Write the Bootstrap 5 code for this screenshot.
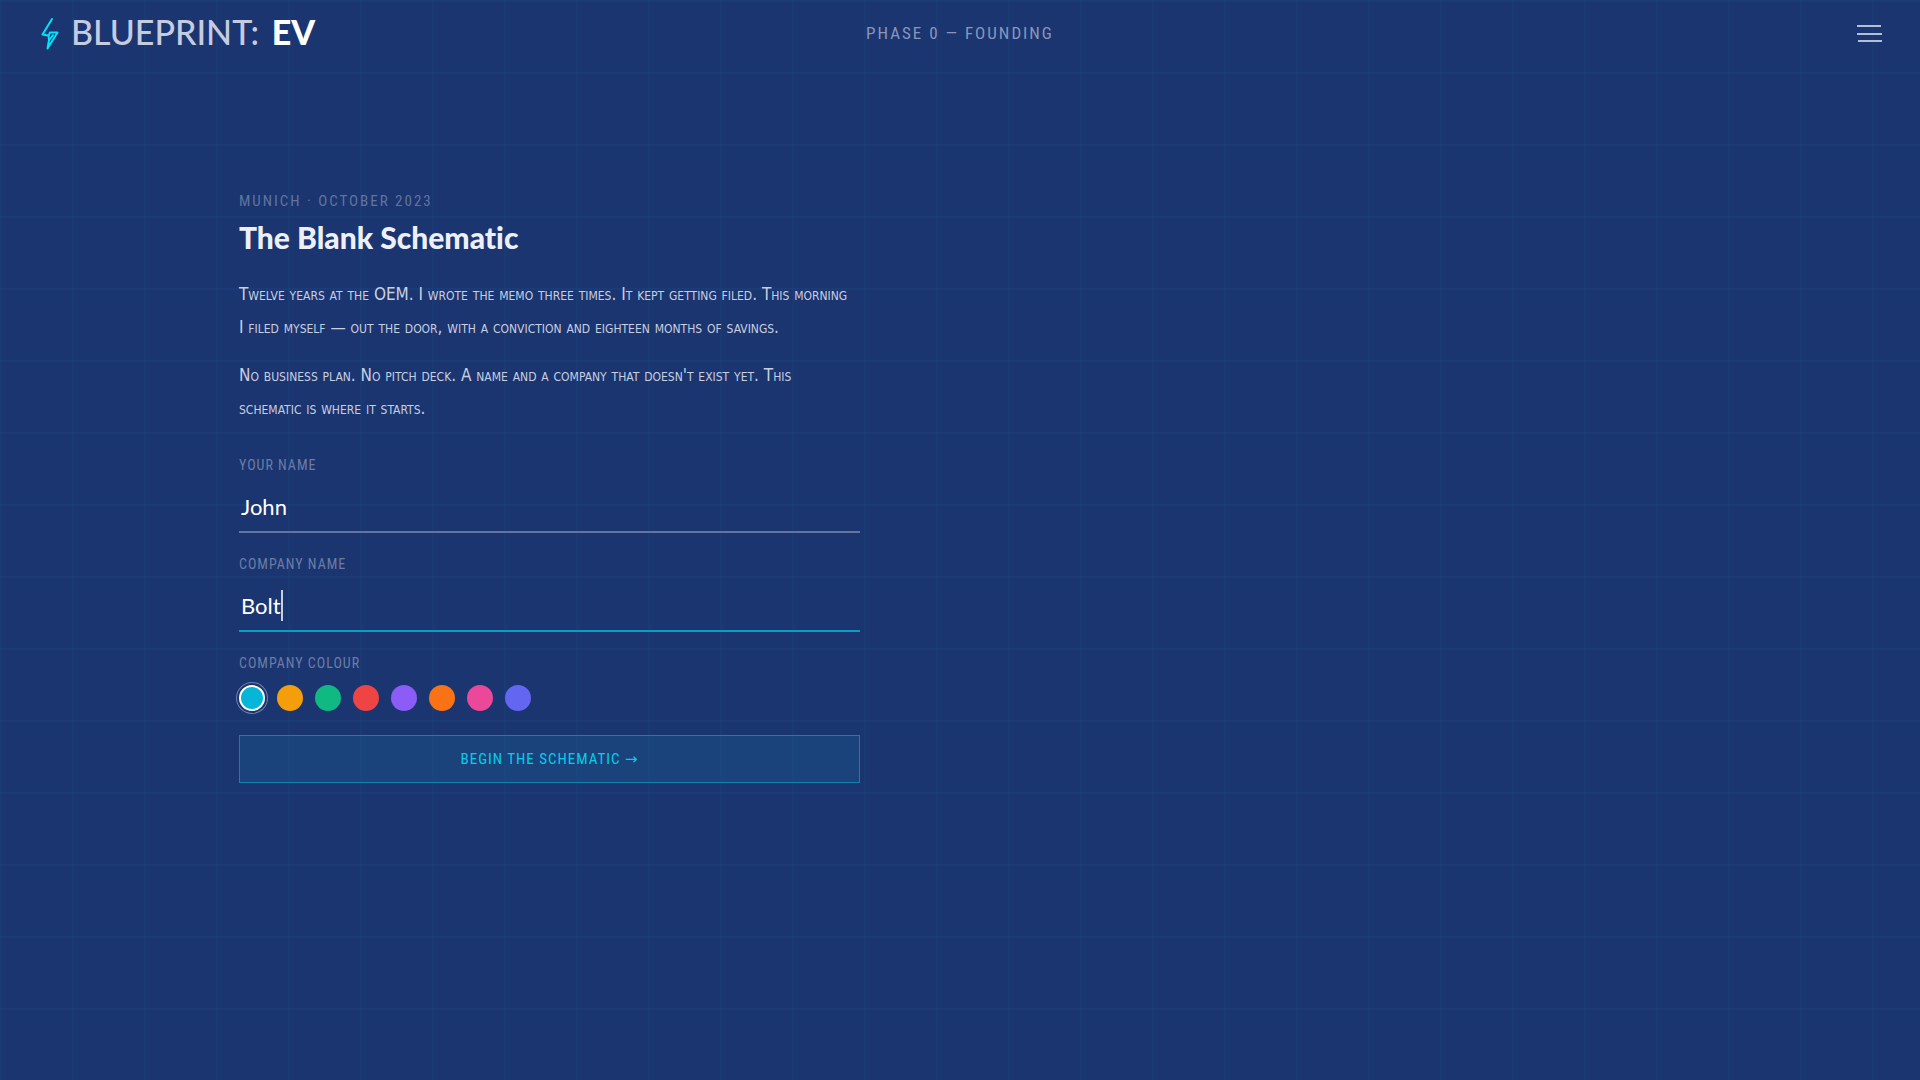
<!DOCTYPE html>
<html lang="en">
<head>
<meta charset="utf-8">
<meta name="viewport" content="width=device-width, initial-scale=1">
<title>Blueprint: EV</title>
<link href="https://cdn.jsdelivr.net/npm/bootstrap@5.3.0/dist/css/bootstrap.min.css" rel="stylesheet">
<style>
  body {
    min-height: 100vh;
    color: #c8cfe0;
    font-family: Lato, sans-serif;
    background-color: #1b3570;
    background-image:
      linear-gradient(rgba(24, 90, 140, .18) 2px, transparent 2px),
      linear-gradient(90deg, rgba(24, 90, 140, .12) 2px, transparent 2px),
      linear-gradient(90deg, rgba(24, 80, 130, .07) 6px, transparent 6px);
    background-size: 72px 72px;
  }
  .topbar { min-height: 68px; padding: 0 38px 0 38px; }
  .brand-name { color: #c6cce0; font-size: 34px; line-height: 40px; padding-bottom: 4px; font-weight: 500; }
  .brand-name strong { color: #fff; font-weight: 900; }
  .brand-mark { margin: 0 11px 0 2px; }
  .caps { font-family: "Roboto Condensed", Roboto, sans-serif; text-transform: uppercase; }
  .phase { color: #8797bb; font-size: 17px; letter-spacing: 2px; }
  .menu-btn { line-height: 0; }
  .page { max-width: 1442px; padding-top: 123px; }
  .story { max-width: 621px; }
  .eyebrow { color: #61749f; font-size: 15px; line-height: 20px; letter-spacing: 2px; }
  .headline { color: #edf0fa; font-size: 30px; line-height: 36px; font-weight: 900; font-variant-ligatures: none; margin-bottom: 23px; }
  .prose { font-family: "DejaVu Sans Condensed", "DejaVu Sans", sans-serif; font-variant: small-caps; font-size: 17px; line-height: 33px; margin-bottom: 30px; }
  .prose p { margin-bottom: 15px; }
  .field { margin-bottom: 21px; }
  .field-label { color: #6b7da6; font-size: 14px; line-height: 20px; letter-spacing: 1px; }
  .line-input, .line-input:focus {
    height: 50px; padding: 0 2px 2px; color: #fff; background: transparent;
    border: 0; border-bottom: 2px solid #66759f; border-radius: 0; box-shadow: none;
    font-size: 22px; caret-color: transparent;
  }
  .line-input.is-current { border-color: #099fc0; }
  .text-cursor { left: 42px; top: 8px; width: 2px; height: 31px; background: #c6cee2; }
  .swatches { gap: 12px; padding: 12px 0 24px; }
  .swatch { appearance: none; width: 26px; height: 26px; margin: 0; border-radius: 50%; background: var(--hue); }
  .swatch:checked { border: 2px solid #fff; box-shadow: 0 0 0 2px #1b3570, 0 0 0 3px #6f80aa; }
  .begin-btn, .begin-btn:hover {
    height: 48px; color: #08cdea; background: rgba(22, 98, 145, .34); border: 1px solid #1083a9; border-radius: 0;
    font-size: 15px; letter-spacing: 1px;
  }
  .arrow { font-family: "DejaVu Sans", sans-serif; line-height: 14px; }
</style>
<script src="https://cdn.jsdelivr.net/npm/bootstrap@5.3.0/dist/js/bootstrap.bundle.min.js"></script>
</head>
<body>
<header class="topbar row g-0 align-items-center">
  <a class="col d-flex align-items-center text-decoration-none" href="#">
    <svg class="brand-mark" width="20" height="34" viewBox="0 0 20 34" fill="none" stroke="#05e3f8" stroke-width="2" stroke-linecap="round" stroke-linejoin="round" aria-hidden="true"><path d="M12 2 2.500 17.500 8 18.500M7.500 31.500 17.500 15.500 10 15.500 8.500 19 9 23 7.500 31.500M9 23.500 13 18"/></svg>
    <span class="brand-name text-nowrap">BLUEPRINT: <strong class="ms-1">EV</strong></span>
  </a>
  <div class="col-auto phase caps">Phase 0 — Founding</div>
  <div class="col d-flex justify-content-end">
    <button class="menu-btn btn p-0 border-0" type="button" aria-label="Menu">
      <svg width="26" height="20" viewBox="0 0 26 20" stroke="#b4bed6" stroke-width="2" stroke-linecap="butt" aria-hidden="true"><path d="M1 2H25M1 10H26M2 17H26"/></svg>
    </button>
  </div>
</header>
<main class="page container-fluid px-0">
  <section class="story">
    <div class="eyebrow caps mb-2">Munich · October 2023</div>
    <h1 class="headline">The Blank Schematic</h1>
    <div class="prose pe-2">
      <p>Twelve years at the OEM. I wrote the memo three times. It kept getting filed. This morning I filed myself — out the door, with a conviction and eighteen months of savings.</p>
      <p class="mb-0">No business plan. No pitch deck. A name and a company that doesn't exist yet. This schematic is where it starts.</p>
    </div>
    <form>
      <div class="field">
        <label class="field-label caps d-block mb-2" for="person">Your name</label>
        <input class="line-input form-control" id="person" type="text" value="John">
      </div>
      <div class="field">
        <label class="field-label caps d-block mb-2" for="company">Company name</label>
        <div class="position-relative">
          <input class="line-input is-current form-control" id="company" type="text" value="Bolt">
          <span class="text-cursor position-absolute"></span>
        </div>
      </div>
      <fieldset>
        <legend class="field-label caps mb-0">Company colour</legend>
        <div class="swatches d-flex">
          <input class="swatch" type="radio" name="colour" aria-label="Cyan" style="--hue:#06b6d9" checked>
          <input class="swatch" type="radio" name="colour" aria-label="Amber" style="--hue:#f59e0b">
          <input class="swatch" type="radio" name="colour" aria-label="Green" style="--hue:#10b981">
          <input class="swatch" type="radio" name="colour" aria-label="Red" style="--hue:#ef4444">
          <input class="swatch" type="radio" name="colour" aria-label="Violet" style="--hue:#8b5cf6">
          <input class="swatch" type="radio" name="colour" aria-label="Orange" style="--hue:#f97316">
          <input class="swatch" type="radio" name="colour" aria-label="Pink" style="--hue:#ec4899">
          <input class="swatch" type="radio" name="colour" aria-label="Indigo" style="--hue:#6366f1">
        </div>
      </fieldset>
      <button class="begin-btn btn w-100 caps" type="button">Begin the schematic <span class="arrow">→</span></button>
    </form>
  </section>
</main>
</body>
</html>
